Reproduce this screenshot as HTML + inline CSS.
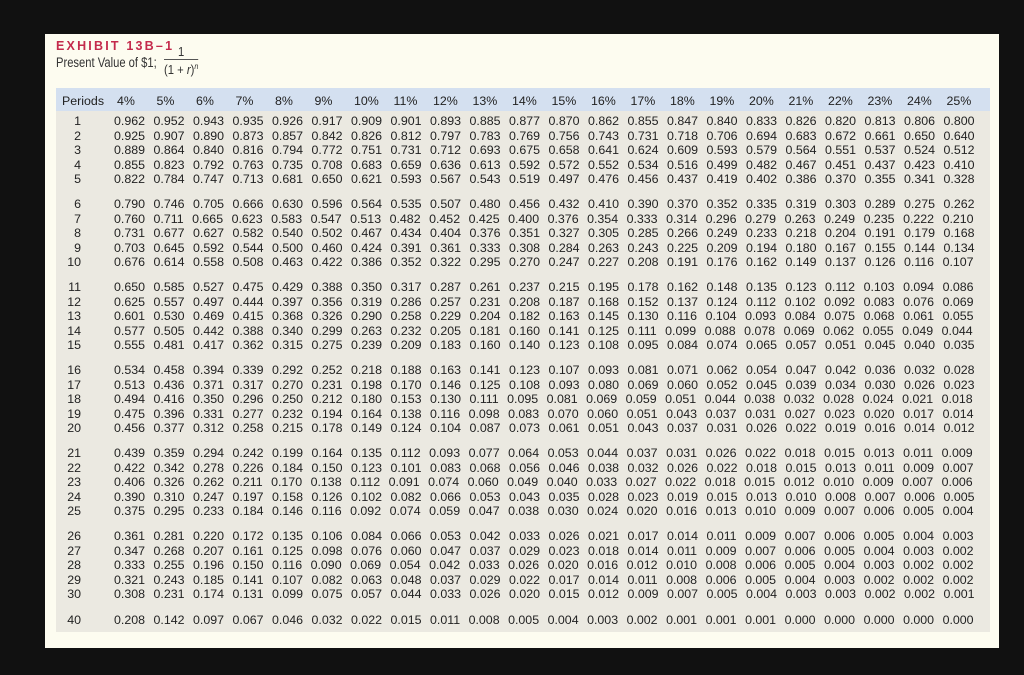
<!DOCTYPE html>
<html><head><meta charset="utf-8"><style>
html,body{margin:0;padding:0;}
body{width:1024px;height:675px;background:#111;position:relative;overflow:hidden;font-family:"Liberation Sans",sans-serif;color:#222;}
.card{position:absolute;left:45px;top:34px;width:954px;height:614px;background:#fdfcf0;}
.title{position:absolute;left:56px;top:39px;font-size:12.5px;font-weight:bold;color:#c42a4c;letter-spacing:2.2px;}
.sub{position:absolute;left:56px;top:55px;font-size:13.5px;color:#333;transform:scaleX(0.83);transform-origin:left;white-space:nowrap;}
.frac{position:absolute;left:164px;top:46px;font-size:12.5px;color:#333;text-align:center;line-height:13px;transform:scaleX(0.9);transform-origin:left;}
.frac .n{border-bottom:1px solid #555;padding:0 2px;}
.hdr{position:absolute;left:56px;top:88px;width:934px;height:23px;background:#d4e0f0;}
.body{position:absolute;left:56px;top:111px;width:934px;height:521px;background:#ebe9e1;}
.h{position:absolute;top:94px;font-size:12.4px;color:#222;}
.p{position:absolute;left:40px;width:41px;text-align:right;font-size:12.4px;line-height:14.5px;}
.v{position:absolute;left:114px;font-size:12.4px;line-height:14.5px;word-spacing:5.05px;white-space:pre;}
</style></head><body>
<div class="card"></div>
<div class="title">EXHIBIT 13B–1</div>
<div class="sub">Present Value of $1;</div>
<div class="frac"><div class="n">1</div><div>(1 + <i>r</i>)<sup style="font-size:8px"><i>n</i></sup></div></div>
<div class="hdr"></div>
<div class="body"></div>
<div class="h" style="left:62px">Periods</div>
<div class="h" style="left:117px">4%</div><div class="h" style="left:156.5px">5%</div><div class="h" style="left:196px">6%</div><div class="h" style="left:235.5px">7%</div><div class="h" style="left:275px">8%</div><div class="h" style="left:314.5px">9%</div><div class="h" style="left:354px">10%</div><div class="h" style="left:393.5px">11%</div><div class="h" style="left:433px">12%</div><div class="h" style="left:472.5px">13%</div><div class="h" style="left:512px">14%</div><div class="h" style="left:551.5px">15%</div><div class="h" style="left:591px">16%</div><div class="h" style="left:630.5px">17%</div><div class="h" style="left:670px">18%</div><div class="h" style="left:709.5px">19%</div><div class="h" style="left:749px">20%</div><div class="h" style="left:788.5px">21%</div><div class="h" style="left:828px">22%</div><div class="h" style="left:867.5px">23%</div><div class="h" style="left:907px">24%</div><div class="h" style="left:946.5px">25%</div>

<div class="p" style="top:114px">1<br>2<br>3<br>4<br>5</div>
<div class="v" style="top:114px">0.962 0.952 0.943 0.935 0.926 0.917 0.909 0.901 0.893 0.885 0.877 0.870 0.862 0.855 0.847 0.840 0.833 0.826 0.820 0.813 0.806 0.800
0.925 0.907 0.890 0.873 0.857 0.842 0.826 0.812 0.797 0.783 0.769 0.756 0.743 0.731 0.718 0.706 0.694 0.683 0.672 0.661 0.650 0.640
0.889 0.864 0.840 0.816 0.794 0.772 0.751 0.731 0.712 0.693 0.675 0.658 0.641 0.624 0.609 0.593 0.579 0.564 0.551 0.537 0.524 0.512
0.855 0.823 0.792 0.763 0.735 0.708 0.683 0.659 0.636 0.613 0.592 0.572 0.552 0.534 0.516 0.499 0.482 0.467 0.451 0.437 0.423 0.410
0.822 0.784 0.747 0.713 0.681 0.650 0.621 0.593 0.567 0.543 0.519 0.497 0.476 0.456 0.437 0.419 0.402 0.386 0.370 0.355 0.341 0.328</div>

<div class="p" style="top:197px">6<br>7<br>8<br>9<br>10</div>
<div class="v" style="top:197px">0.790 0.746 0.705 0.666 0.630 0.596 0.564 0.535 0.507 0.480 0.456 0.432 0.410 0.390 0.370 0.352 0.335 0.319 0.303 0.289 0.275 0.262
0.760 0.711 0.665 0.623 0.583 0.547 0.513 0.482 0.452 0.425 0.400 0.376 0.354 0.333 0.314 0.296 0.279 0.263 0.249 0.235 0.222 0.210
0.731 0.677 0.627 0.582 0.540 0.502 0.467 0.434 0.404 0.376 0.351 0.327 0.305 0.285 0.266 0.249 0.233 0.218 0.204 0.191 0.179 0.168
0.703 0.645 0.592 0.544 0.500 0.460 0.424 0.391 0.361 0.333 0.308 0.284 0.263 0.243 0.225 0.209 0.194 0.180 0.167 0.155 0.144 0.134
0.676 0.614 0.558 0.508 0.463 0.422 0.386 0.352 0.322 0.295 0.270 0.247 0.227 0.208 0.191 0.176 0.162 0.149 0.137 0.126 0.116 0.107</div>

<div class="p" style="top:280px">11<br>12<br>13<br>14<br>15</div>
<div class="v" style="top:280px">0.650 0.585 0.527 0.475 0.429 0.388 0.350 0.317 0.287 0.261 0.237 0.215 0.195 0.178 0.162 0.148 0.135 0.123 0.112 0.103 0.094 0.086
0.625 0.557 0.497 0.444 0.397 0.356 0.319 0.286 0.257 0.231 0.208 0.187 0.168 0.152 0.137 0.124 0.112 0.102 0.092 0.083 0.076 0.069
0.601 0.530 0.469 0.415 0.368 0.326 0.290 0.258 0.229 0.204 0.182 0.163 0.145 0.130 0.116 0.104 0.093 0.084 0.075 0.068 0.061 0.055
0.577 0.505 0.442 0.388 0.340 0.299 0.263 0.232 0.205 0.181 0.160 0.141 0.125 0.111 0.099 0.088 0.078 0.069 0.062 0.055 0.049 0.044
0.555 0.481 0.417 0.362 0.315 0.275 0.239 0.209 0.183 0.160 0.140 0.123 0.108 0.095 0.084 0.074 0.065 0.057 0.051 0.045 0.040 0.035</div>

<div class="p" style="top:363px">16<br>17<br>18<br>19<br>20</div>
<div class="v" style="top:363px">0.534 0.458 0.394 0.339 0.292 0.252 0.218 0.188 0.163 0.141 0.123 0.107 0.093 0.081 0.071 0.062 0.054 0.047 0.042 0.036 0.032 0.028
0.513 0.436 0.371 0.317 0.270 0.231 0.198 0.170 0.146 0.125 0.108 0.093 0.080 0.069 0.060 0.052 0.045 0.039 0.034 0.030 0.026 0.023
0.494 0.416 0.350 0.296 0.250 0.212 0.180 0.153 0.130 0.111 0.095 0.081 0.069 0.059 0.051 0.044 0.038 0.032 0.028 0.024 0.021 0.018
0.475 0.396 0.331 0.277 0.232 0.194 0.164 0.138 0.116 0.098 0.083 0.070 0.060 0.051 0.043 0.037 0.031 0.027 0.023 0.020 0.017 0.014
0.456 0.377 0.312 0.258 0.215 0.178 0.149 0.124 0.104 0.087 0.073 0.061 0.051 0.043 0.037 0.031 0.026 0.022 0.019 0.016 0.014 0.012</div>

<div class="p" style="top:446px">21<br>22<br>23<br>24<br>25</div>
<div class="v" style="top:446px">0.439 0.359 0.294 0.242 0.199 0.164 0.135 0.112 0.093 0.077 0.064 0.053 0.044 0.037 0.031 0.026 0.022 0.018 0.015 0.013 0.011 0.009
0.422 0.342 0.278 0.226 0.184 0.150 0.123 0.101 0.083 0.068 0.056 0.046 0.038 0.032 0.026 0.022 0.018 0.015 0.013 0.011 0.009 0.007
0.406 0.326 0.262 0.211 0.170 0.138 0.112 0.091 0.074 0.060 0.049 0.040 0.033 0.027 0.022 0.018 0.015 0.012 0.010 0.009 0.007 0.006
0.390 0.310 0.247 0.197 0.158 0.126 0.102 0.082 0.066 0.053 0.043 0.035 0.028 0.023 0.019 0.015 0.013 0.010 0.008 0.007 0.006 0.005
0.375 0.295 0.233 0.184 0.146 0.116 0.092 0.074 0.059 0.047 0.038 0.030 0.024 0.020 0.016 0.013 0.010 0.009 0.007 0.006 0.005 0.004</div>

<div class="p" style="top:529px">26<br>27<br>28<br>29<br>30</div>
<div class="v" style="top:529px">0.361 0.281 0.220 0.172 0.135 0.106 0.084 0.066 0.053 0.042 0.033 0.026 0.021 0.017 0.014 0.011 0.009 0.007 0.006 0.005 0.004 0.003
0.347 0.268 0.207 0.161 0.125 0.098 0.076 0.060 0.047 0.037 0.029 0.023 0.018 0.014 0.011 0.009 0.007 0.006 0.005 0.004 0.003 0.002
0.333 0.255 0.196 0.150 0.116 0.090 0.069 0.054 0.042 0.033 0.026 0.020 0.016 0.012 0.010 0.008 0.006 0.005 0.004 0.003 0.002 0.002
0.321 0.243 0.185 0.141 0.107 0.082 0.063 0.048 0.037 0.029 0.022 0.017 0.014 0.011 0.008 0.006 0.005 0.004 0.003 0.002 0.002 0.002
0.308 0.231 0.174 0.131 0.099 0.075 0.057 0.044 0.033 0.026 0.020 0.015 0.012 0.009 0.007 0.005 0.004 0.003 0.003 0.002 0.002 0.001</div>

<div class="p" style="top:613px">40</div>
<div class="v" style="top:613px">0.208 0.142 0.097 0.067 0.046 0.032 0.022 0.015 0.011 0.008 0.005 0.004 0.003 0.002 0.001 0.001 0.001 0.000 0.000 0.000 0.000 0.000</div>
</body></html>
